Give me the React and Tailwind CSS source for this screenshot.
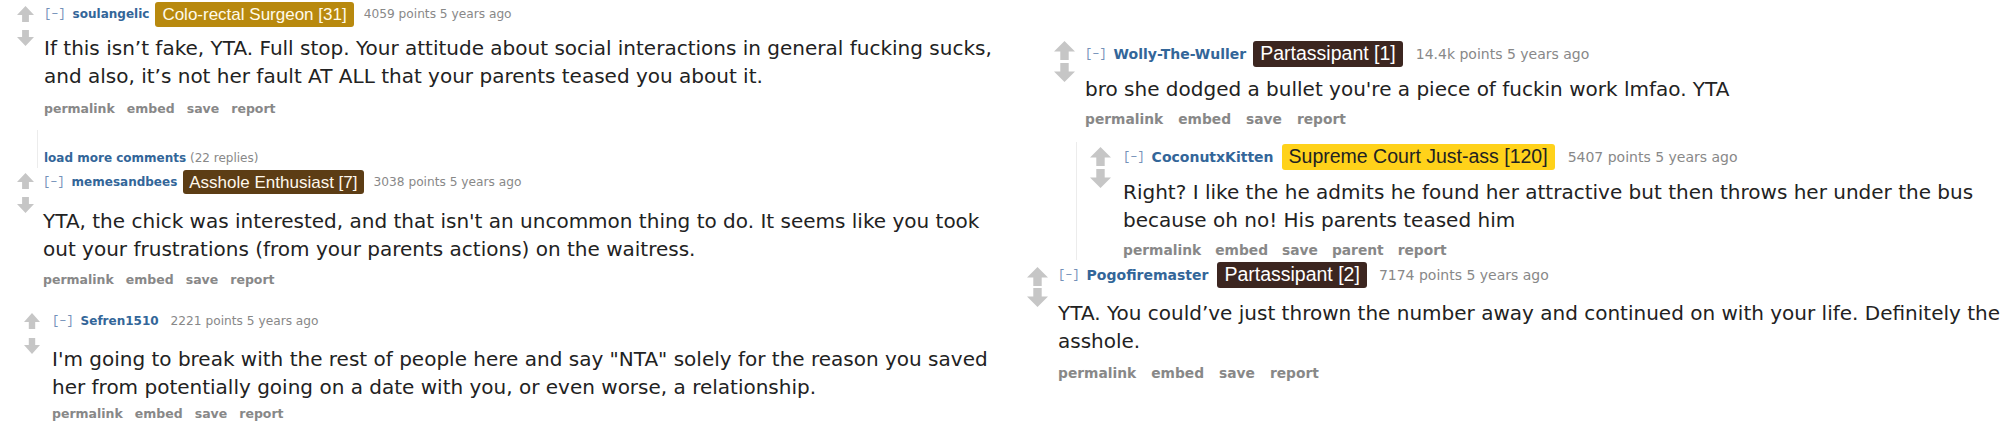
import React from 'react';

// reddit-style vote arrows
function Arrow({ up, className }) {
  return (
    <svg viewBox="0 0 20 18" preserveAspectRatio="none" className={className}>
      <path
        fill="#c6c6c6"
        d={up ? 'M10 0L20 10H14V18H6V10H0Z' : 'M6 0H14V8H20L10 18L0 8H6Z'}
      />
    </svg>
  );
}

function Votes({ className, arrowCls, downCls }) {
  return (
    <div className={`flex flex-col shrink-0 ${className}`}>
      <Arrow up className={arrowCls} />
      <Arrow className={`${arrowCls} ${downCls}`} />
    </div>
  );
}

function Flair({ text, className }) {
  return (
    <span
      className={`flex items-center rounded-[3px] leading-none font-['Liberation_Sans',Arial,sans-serif] ${className}`}
    >
      {text}
    </span>
  );
}

function Tagline({ big, user, flair, points, nameGap, pointsGap }) {
  return (
    <div
      className={`flex items-center h-[28px] whitespace-nowrap ${big ? 'text-[14px]' : 'text-[12.2px]'}`}
    >
      <span className="font-['Liberation_Mono',monospace] text-[12px] text-[#7391b8]">[–]</span>
      <span className={`font-bold text-[#369] ml-[7px] ${big ? 'text-[14px]' : 'text-[12px]'}`}>{user}</span>
      {flair && <span className={nameGap}>{flair}</span>}
      <span className={`text-[#888] ${pointsGap}`}>{points} points 5 years ago</span>
    </div>
  );
}

function Body({ lines, className = '' }) {
  return (
    <div className={`text-[20px] leading-[28px] text-[#222] whitespace-nowrap ${className}`}>
      {lines.map((l) => (
        <div key={l}>{l}</div>
      ))}
    </div>
  );
}

function Links({ items, className }) {
  return (
    <div className={`flex items-center font-bold text-[#888] whitespace-nowrap ${className}`}>
      {items.map((t) => (
        <span key={t}>{t}</span>
      ))}
    </div>
  );
}

const basic = ['permalink', 'embed', 'save', 'report'];

export default function App() {
  return (
    <div className="w-[2000px] h-[421px] overflow-hidden bg-white flex font-['DejaVu_Sans',Verdana,sans-serif]">
      {/* left screenshot */}
      <div className="w-[1020px] shrink-0 flex flex-col">
        <div className="flex pl-[17px]">
          <Votes className="pt-[6px]" arrowCls="block w-[17px] h-[16px]" downCls="mt-[8px]" />
          <div className="ml-[10px]">
            <Tagline
              user="soulangelic"
              points="4059"
              nameGap="ml-[6px]"
              pointsGap="ml-[10px]"
              flair={<Flair text="Colo-rectal Surgeon [31]" className="h-[25px] px-[7px] text-[17px] bg-[#b8890e] text-[#fffbea]" />}
            />
            <Body
              className="mt-[6px]"
              lines={[
                'If this isn’t fake, YTA. Full stop. Your attitude about social interactions in general fucking sucks,',
                'and also, it’s not her fault AT ALL that your parents teased you about it.',
              ]}
            />
            <Links items={basic} className="mt-[8px] h-[22px] gap-[12px] text-[12.5px]" />
          </div>
        </div>

        <div className="ml-[37px] mt-[10px] pt-[18px] pl-[6px] border-l border-[#ececec]">
          <div className="h-[20px] leading-[20px] text-[12px] whitespace-nowrap">
            <span className="font-bold text-[#369]">load more comments</span>{' '}
            <span className="text-[#888]">(22 replies)</span>
          </div>
        </div>

        <div className="flex pl-[17px]">
          <Votes className="pt-[5px]" arrowCls="block w-[17px] h-[16px]" downCls="mt-[8px]" />
          <div className="ml-[9px]">
            <Tagline
              user="memesandbees"
              points="3038"
              nameGap="ml-[6px]"
              pointsGap="ml-[10px]"
              flair={<Flair text="Asshole Enthusiast [7]" className="h-[24px] px-[6px] text-[17px] bg-[#5c3d15] text-[#fff8ec]" />}
            />
            <Body
              className="mt-[11px]"
              lines={[
                "YTA, the chick was interested, and that isn't an uncommon thing to do. It seems like you took",
                'out your frustrations (from your parents actions) on the waitress.',
              ]}
            />
            <Links items={basic} className="mt-[6px] h-[22px] gap-[12px] text-[12.5px]" />
          </div>
        </div>

        <div className="flex pl-[24px] mt-[16px]">
          <Votes className="pt-[6px]" arrowCls="block w-[16px] h-[16px]" downCls="mt-[9px]" />
          <div className="ml-[12px]">
            <Tagline user="Sefren1510" points="2221" pointsGap="ml-[12px]" />
            <Body
              className="mt-[10px]"
              lines={[
                'I\'m going to break with the rest of people here and say "NTA" solely for the reason you saved',
                'her from potentially going on a date with you, or even worse, a relationship.',
              ]}
            />
            <Links items={basic} className="mt-[2px] h-[22px] gap-[12px] text-[12.5px]" />
          </div>
        </div>
      </div>

      {/* right screenshot */}
      <div className="flex-1 flex flex-col">
        <div className="flex pl-[34px] mt-[40px]">
          <Votes className="pt-[1px]" arrowCls="block w-[21px] h-[19px]" downCls="mt-[3px]" />
          <div className="ml-[10px]">
            <Tagline
              big
              user="Wolly-The-Wuller"
              points="14.4k"
              nameGap="ml-[7px]"
              pointsGap="ml-[13px]"
              flair={<Flair text="Partassipant [1]" className="h-[26px] px-[7px] text-[19.5px] bg-[#3c2620] text-white" />}
            />
            <Body className="mt-[7px]" lines={["bro she dodged a bullet you're a piece of fuckin work lmfao. YTA"]} />
            <Links items={basic} className="mt-[5px] h-[22px] gap-[15px] text-[13.8px]" />
          </div>
        </div>

        <div className="ml-[56px] mt-[12px] pt-[1px] pl-[13px] border-l border-[#ececec]">
          <div className="flex">
            <Votes className="pt-[4px]" arrowCls="block w-[21px] h-[19px]" downCls="mt-[3px]" />
            <div className="ml-[12px]">
              <Tagline
                big
                user="CoconutxKitten"
                points="5407"
                nameGap="ml-[8px]"
                pointsGap="ml-[13px]"
                flair={<Flair text="Supreme Court Just-ass [120]" className="h-[26px] px-[7px] text-[19.5px] bg-[#ffd21a] text-[#222]" />}
              />
              <Body
                className="mt-[7px]"
                lines={[
                  'Right? I like the he admits he found her attractive but then throws her under the bus',
                  'because oh no! His parents teased him',
                ]}
              />
              <Links
                items={['permalink', 'embed', 'save', 'parent', 'report']}
                className="mt-[6px] h-[20px] gap-[14px] text-[13.8px]"
              />
            </div>
          </div>
        </div>

        <div className="flex pl-[7px] mt-[1px]">
          <Votes className="pt-[6px]" arrowCls="block w-[21px] h-[19px]" downCls="mt-[2px]" />
          <div className="ml-[10px]">
            <Tagline
              big
              user="Pogofiremaster"
              points="7174"
              nameGap="ml-[9px]"
              pointsGap="ml-[12px]"
              flair={<Flair text="Partassipant [2]" className="h-[26px] px-[7px] text-[19.5px] bg-[#3c2620] text-white" />}
            />
            <Body
              className="mt-[10px]"
              lines={[
                'YTA. You could’ve just thrown the number away and continued on with your life. Definitely the',
                'asshole.',
              ]}
            />
            <Links items={basic} className="mt-[7px] h-[22px] gap-[15px] text-[13.8px]" />
          </div>
        </div>
      </div>
    </div>
  );
}
